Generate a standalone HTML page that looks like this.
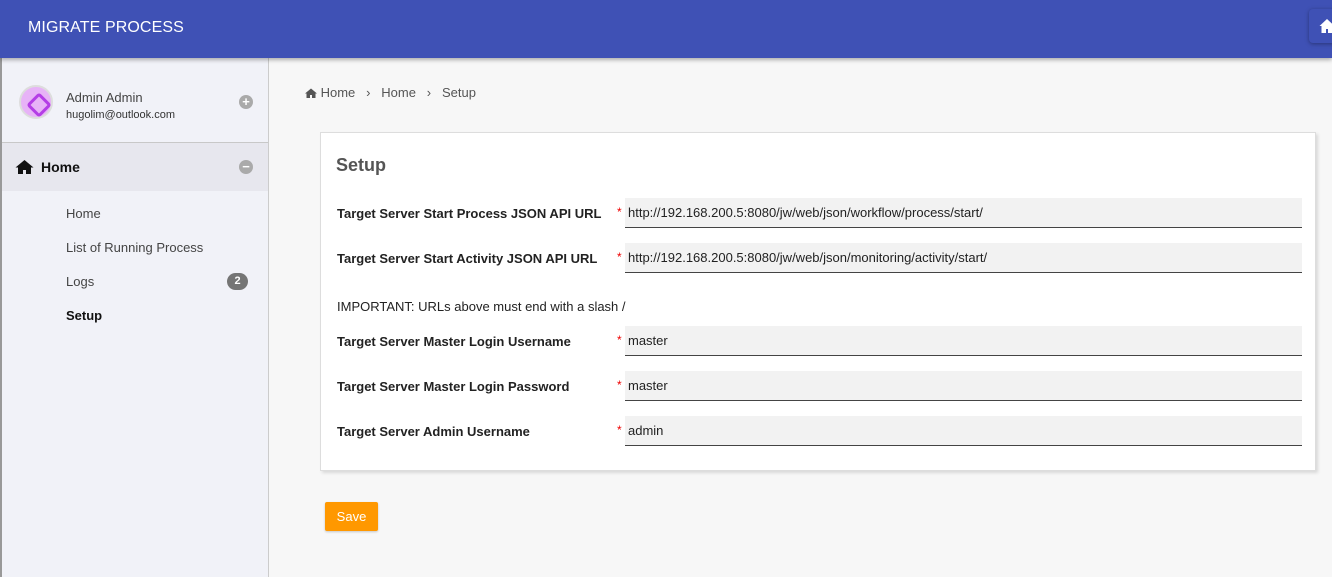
<!DOCTYPE html>
<html><head><style>
*{box-sizing:border-box;margin:0;padding:0}
body{width:1332px;height:577px;overflow:hidden;background:#f7f7f7;font-family:"Liberation Sans",sans-serif;position:relative}
.hdr{position:absolute;left:0;top:0;width:1332px;height:58px;background:#3f51b5;box-shadow:0 2px 4px rgba(0,0,0,.3);z-index:2}
.hdr .t{position:absolute;left:28px;top:19px;color:#fff;font-size:16px;letter-spacing:.1px}
.hbtn{position:absolute;left:1309px;top:9px;width:40px;height:34px;border-radius:4px;background:#3f51b5;box-shadow:0 1px 4px rgba(0,0,0,.35)}
.strip{position:absolute;left:0;top:58px;width:2px;height:519px;background:#999}
.side{position:absolute;left:2px;top:58px;width:267px;height:519px;background:#f1f2f8;border-right:1px solid #ccc}
.prof{height:85px;border-bottom:1px solid #c8c8c8;position:relative}
.av{position:absolute;left:17px;top:27px;width:34px;height:34px;border-radius:50%;background:#e7b3f7;border:2px solid #ddd}
.av:after{content:"";position:absolute;left:9px;top:9px;width:12px;height:12px;border:3px solid #b43ee6;border-radius:3px;transform:rotate(45deg)}
.nm{position:absolute;left:64px;top:32px;font-size:13px;color:#444}
.em{position:absolute;left:64px;top:51px;font-size:11px;color:#333}
.circ{position:absolute;left:237px;width:14px;height:14px;border-radius:50%;background:#aaa;color:#fff;font-size:13px;line-height:14px;text-align:center;font-weight:bold}
.homer{height:48px;background:#e7e7ee;position:relative}
.homer b{position:absolute;left:39px;top:16px;font-size:14px;color:#111}
.sub{position:absolute;left:64px;font-size:13px;color:#444}
.badge{position:absolute;left:225px;top:215px;width:21px;height:17px;border-radius:9px;background:#757575;color:#fff;font-size:11px;font-weight:bold;text-align:center;line-height:17px}
.bc{position:absolute;left:305px;top:85px;font-size:13px;color:#555}
.card{position:absolute;left:320px;top:132px;width:996px;height:339px;background:#fff;border:1px solid #ddd;box-shadow:2px 2px 3px rgba(0,0,0,.12)}
.card h2{position:absolute;left:15px;top:22px;font-size:18px;color:#555}
.lbl{position:absolute;left:16px;font-size:13px;font-weight:bold;color:#222}
.star{position:absolute;left:296px;color:#e00;font-size:12px}
.inp{position:absolute;left:304px;width:677px;height:30px;background:#f2f2f2;border-bottom:1.5px solid #444;font-size:13px;color:#222;padding:7px 0 0 3px}
.imp{position:absolute;left:16px;top:166px;font-size:13px;color:#222}
.save{position:absolute;left:325px;top:502px;width:53px;height:29px;background:#ff9800;border-radius:2px;color:#fff;font-size:13px;text-align:center;line-height:29px;box-shadow:0 1px 2px rgba(0,0,0,.2)}
</style></head><body>
<div class="hdr"><div class="t">MIGRATE PROCESS</div><div class="hbtn"><svg style="position:absolute;left:10px;top:9px" width="16" height="15" viewBox="0 0 16 15"><path d="M8 1L0.5 8h2v7h4.5v-4h2v4h4.5V8h2z" fill="#fff"/></svg></div></div>
<div class="strip"></div>
<div class="side">
<div class="prof"><div class="av"></div><div class="nm">Admin Admin</div><div class="em">hugolim@outlook.com</div><div class="circ" style="top:37px">+</div></div>
<div class="homer"><svg style="position:absolute;left:13px;top:16px" width="19" height="15" viewBox="0 0 19 15"><path d="M9.5 1L0.5 8.5h2.5V15h5v-4h3v4h5V8.5h2.5z" fill="#111"/></svg><b>Home</b><div class="circ" style="top:17px">−</div></div>
<div class="sub" style="top:148px">Home</div>
<div class="sub" style="top:182px">List of Running Process</div>
<div class="sub" style="top:216px">Logs</div>
<div class="sub" style="top:250px;font-weight:bold;color:#111">Setup</div>
<div class="badge">2</div>
</div>
<div class="bc"><svg width="12" height="10" viewBox="0 0 12 10" style="vertical-align:-1px"><path d="M6 0.5L0 5.5h1.5V10h3.5V7h2v3h3.5V5.5H12z" fill="#555"/></svg> Home &nbsp;&nbsp;›&nbsp;&nbsp; Home &nbsp;&nbsp;›&nbsp;&nbsp; Setup</div>
<div class="card">
<h2>Setup</h2>
<div class="lbl" style="top:73px">Target Server Start Process JSON API URL</div><div class="star" style="top:72px">*</div><div class="inp" style="top:65px">http://192.168.200.5:8080/jw/web/json/workflow/process/start/</div>
<div class="lbl" style="top:118px">Target Server Start Activity JSON API URL</div><div class="star" style="top:117px">*</div><div class="inp" style="top:110px">http://192.168.200.5:8080/jw/web/json/monitoring/activity/start/</div>
<div class="imp">IMPORTANT: URLs above must end with a slash /</div>
<div class="lbl" style="top:201px">Target Server Master Login Username</div><div class="star" style="top:200px">*</div><div class="inp" style="top:193px">master</div>
<div class="lbl" style="top:246px">Target Server Master Login Password</div><div class="star" style="top:245px">*</div><div class="inp" style="top:238px">master</div>
<div class="lbl" style="top:291px">Target Server Admin Username</div><div class="star" style="top:290px">*</div><div class="inp" style="top:283px">admin</div>
</div>
<div class="save">Save</div>
</body></html>
